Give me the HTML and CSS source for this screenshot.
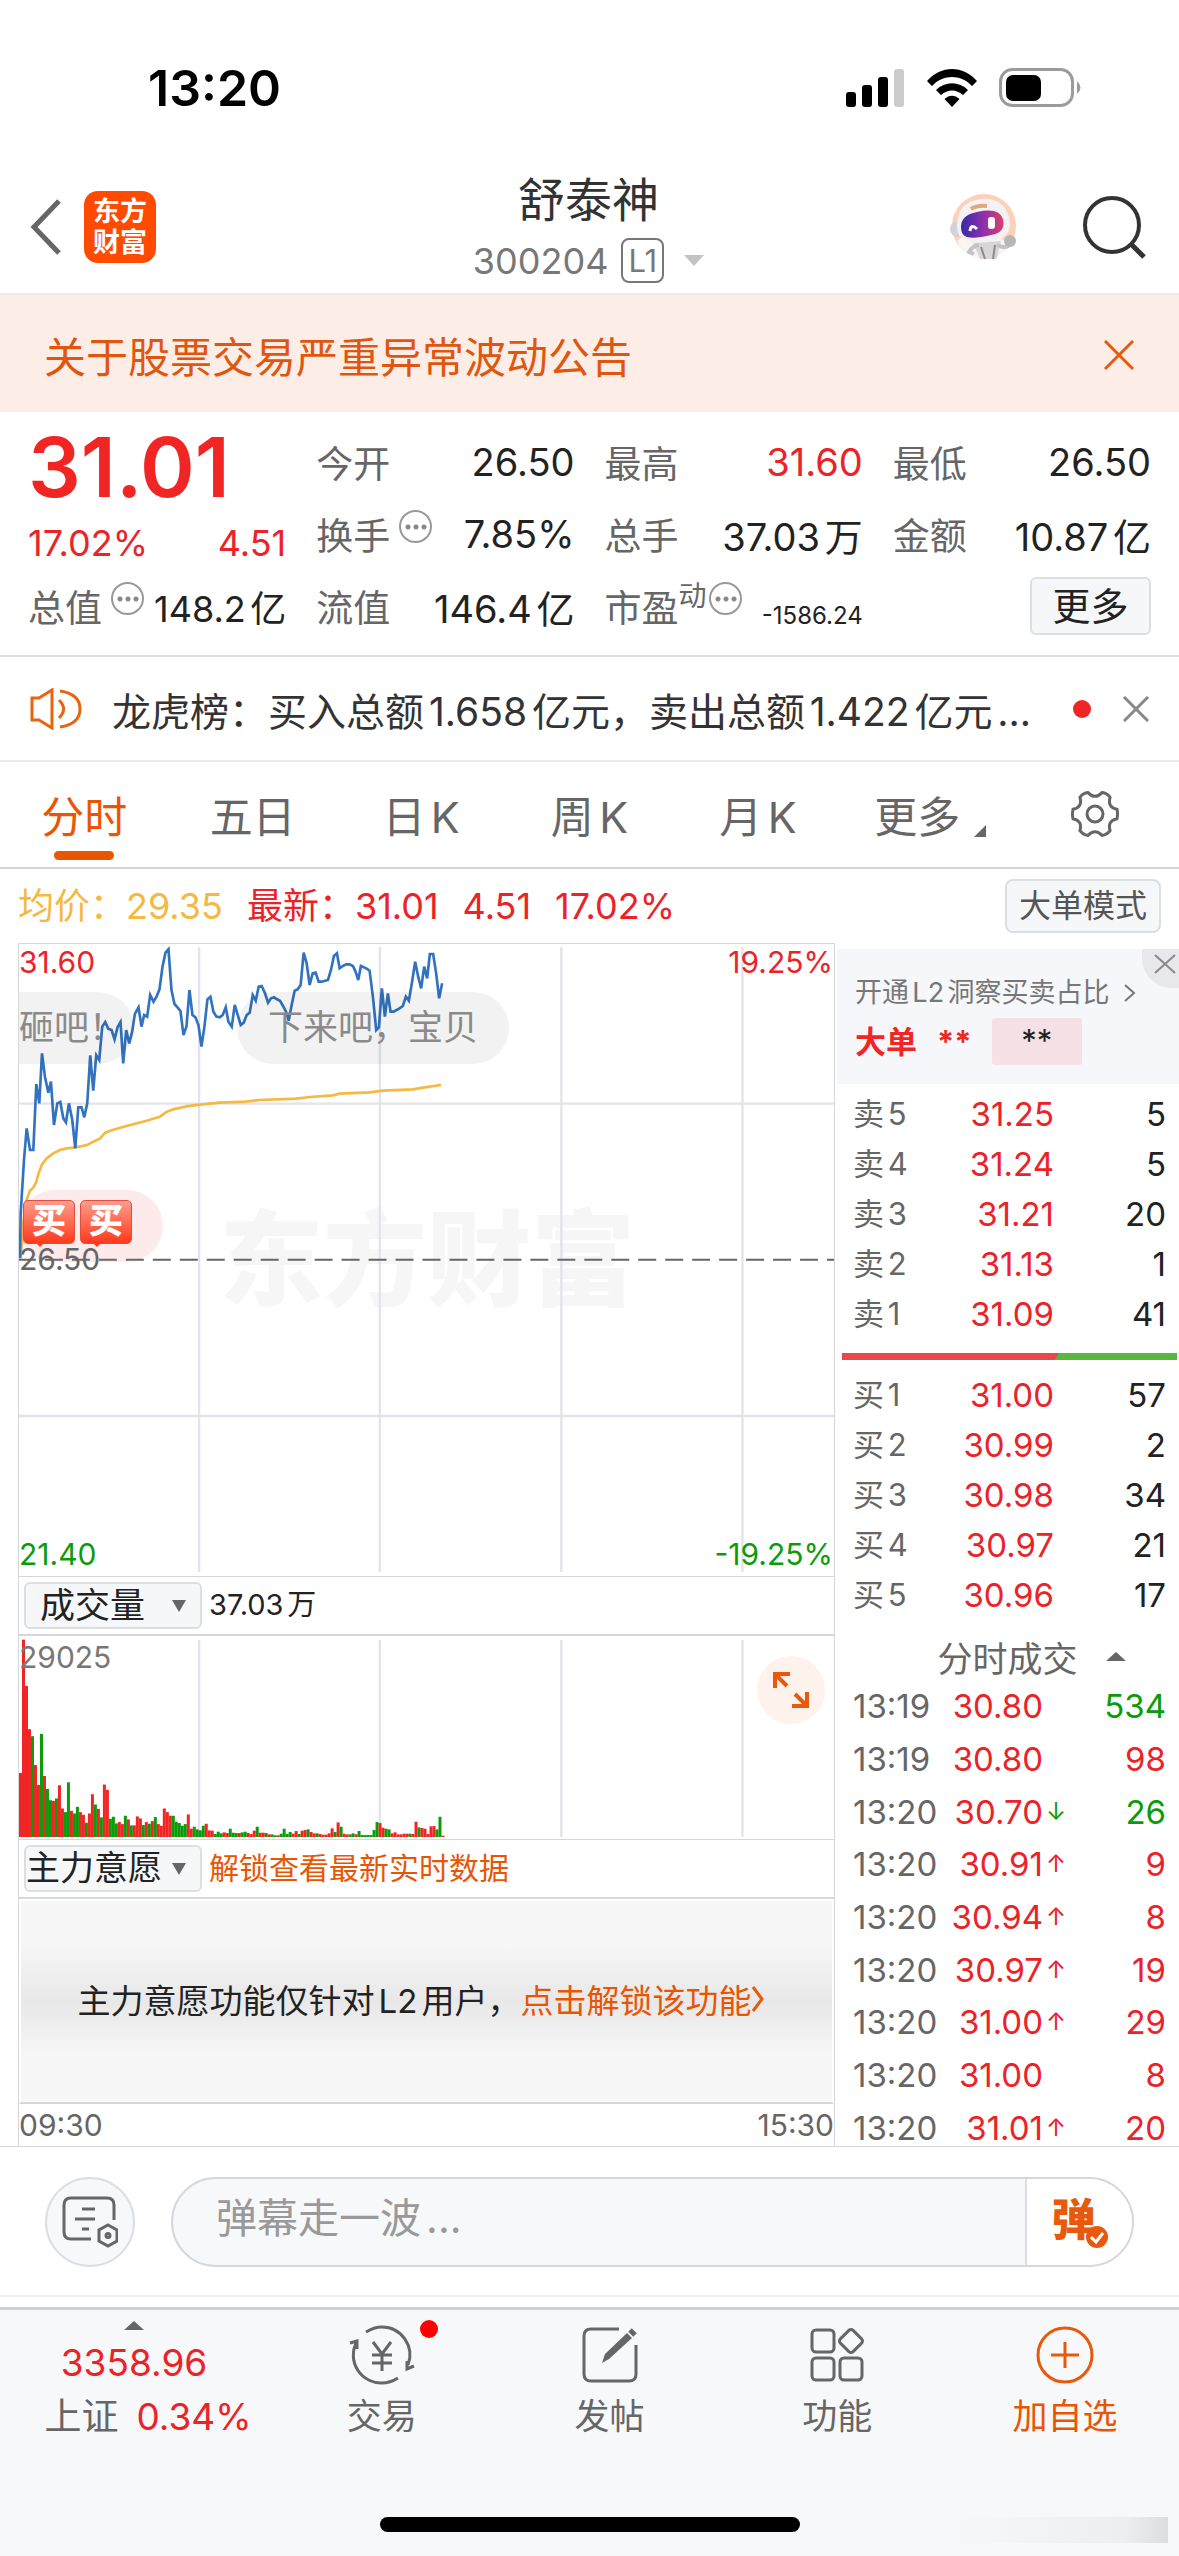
FILE: index.html
```html
<!DOCTYPE html>
<html lang="zh-CN">
<head>
    <meta charset="UTF-8">
    <meta name="viewport" content="width=device-width">
    <title>舒泰神 300204</title>
    <link rel="stylesheet" href="styles.css">
</head>
<body>
    <div class="status">
        <span class="clock">13:20</span>
        <svg class="status-icons" width="236" height="40" viewBox="0 0 236 40">
            <rect x="0" y="24" width="10" height="15" rx="3"/>
            <rect x="16" y="17" width="10" height="22" rx="3"/>
            <rect x="32" y="9" width="10" height="30" rx="3"/>
            <rect x="48" y="1" width="10" height="38" rx="3" fill="#ccc"/>
            <path d="M81 13C95-3 117-3 131 13L126 18C115 6 97 6 86 18Z"/>
            <path d="M90 22C99 13 113 13 122 22L117 27C110 21 102 21 95 27Z"/>
            <path d="M98.500 31C103 26.500 109 26.500 113.500 31L106 39Z"/>
            <rect x="154.500" y="1.500" width="72" height="36" rx="12" fill="none" stroke="#9b9b9b" stroke-width="3"/>
            <rect x="160" y="7" width="35" height="26" rx="7"/>
            <path d="M231 13Q238 19.500 231 26Z" fill="#9b9b9b"/>
        </svg>
    </div>

    <div class="header">
        <div class="header-left">
            <button class="icon-btn" aria-label="返回">
                <svg width="32" height="56" viewBox="0 0 32 56" fill="none" stroke="#666" stroke-width="5"><path d="M29 2L4 28L29 54"/></svg>
            </button>
            <a class="logo" href="#"><span>东方</span><span>财富</span></a>
        </div>
        <div class="title">
            <h1>舒泰神</h1>
            <div class="code">300204 <span class="level">L1</span><i class="tri-down"></i></div>
        </div>
        <div class="header-right">
            <svg width="72" height="72" viewBox="0 0 72 72">
                <circle cx="35" cy="35" r="32" fill="#fdd0b8"/>
                <path d="M8 50Q14 66 34 68Q52 68 60 54L46 42H18Z" fill="#fbf5f2"/>
                <path d="M24 52L31 68H48L52 50Z" fill="#d9d6d8"/>
                <path d="M32 56L36 68M46 54L44 68" stroke="#8e888c" stroke-width="2"/>
                <path d="M30 54Q22 56 20 61L25 63M48 54Q57 59 62 52" stroke="#c6c3c6" stroke-width="4" fill="none"/>
                <circle cx="61" cy="50" r="6" fill="#b9b5b8"/>
                <circle cx="9" cy="38" r="8" fill="#d5d2d5"/>
                <path d="M8 36Q8 10 32 8Q54 6 60 26Q64 44 50 48Q34 54 18 50Q8 46 8 36Z" fill="#f3f1f3"/>
                <path d="M22 18Q28 14 38 15" stroke="#e0a878" stroke-width="4" fill="none"/>
                <linearGradient id="visor"><stop offset="0" stop-color="#352aa8"/><stop offset=".5" stop-color="#8a2fb0"/><stop offset="1" stop-color="#dc3e68"/></linearGradient>
                <path d="M12 36Q12 24 28 21Q50 16 54 28Q57 42 42 44Q26 48 18 46Q12 44 12 36Z" fill="url(#visor)"/>
                <path d="M21 40Q22 32 28 38" stroke="#fff" stroke-width="3" fill="none"/>
                <rect x="39" y="26" width="7" height="12" rx="3" fill="#fff"/>
            </svg>
            <button class="icon-btn" aria-label="搜索">
                <svg width="66" height="66" viewBox="0 0 66 66" fill="none" stroke="#333" stroke-width="4"><circle cx="31" cy="31" r="27"/><path d="M50 50L63 63" stroke-width="5"/></svg>
            </button>
        </div>
    </div>

    <div class="notice">
        <a href="#">关于股票交易严重异常波动公告</a>
        <button class="icon-btn" aria-label="关闭公告">
            <svg width="32" height="32" viewBox="0 0 32 32" stroke="#e8590c" stroke-width="3"><path d="M2 2L30 30M30 2L2 30"/></svg>
        </button>
    </div>

    <div class="quote">
        <div class="price-box">
            <div class="price">31.01</div>
            <div class="cell red small"><span>17.02%</span><span>4.51</span></div>
        </div>
        <div class="cell c2"><span class="label">今开</span><span>26.50</span></div>
        <div class="cell c3"><span class="label">最高</span><span class="red">31.60</span></div>
        <div class="cell c4"><span class="label">最低</span><span>26.50</span></div>
        <div class="cell c2"><span class="label">换手<i class="info"></i></span><span>7.85%</span></div>
        <div class="cell c3"><span class="label">总手</span><span>37.03万</span></div>
        <div class="cell c4"><span class="label">金额</span><span>10.87亿</span></div>
        <div class="cell c1 small"><span class="label">总值<i class="info"></i></span><span>148.2亿</span></div>
        <div class="cell c2"><span class="label">流值</span><span>146.4亿</span></div>
        <div class="cell c3"><span class="label">市盈<sup>动</sup><i class="info near"></i></span><span class="pe">-1586.24</span></div>
        <div class="cell c4"><button class="more">更多</button></div>
    </div>

    <div class="news">
        <svg width="52" height="42" viewBox="0 0 52 42" fill="none" stroke="#e8640f" stroke-width="3">
            <path d="M2 10H9L22 2V40L9 32H2Z"/>
            <path d="M29 12Q38 21 29 30M30 3Q50 6 50 21Q50 36 30 39"/>
        </svg>
        <a href="#">龙虎榜：买入总额1.658亿元，卖出总额1.422亿元...</a>
        <i class="dot"></i>
        <button class="icon-btn" aria-label="关闭">
            <svg width="26" height="26" viewBox="0 0 26 26" stroke="#888" stroke-width="3"><path d="M1 1L25 25M25 1L1 25"/></svg>
        </button>
    </div>

    <div class="tabs">
        <button class="selected">分时</button>
        <button>五日</button>
        <button>日K</button>
        <button>周K</button>
        <button>月K</button>
        <button class="tab-more">更多</button>
        <button aria-label="设置">
            <svg width="48" height="46" viewBox="-1 0 48 46" fill="none" stroke="#666" stroke-width="3">
                <path d="M45 18.300Q46 23 45 27.700Q35.100 30 38.100 39.700Q35 43.800 30 44.400Q23 37 16 44.400Q11 43.800 7.900 39.700Q10.900 30 1 27.700Q0 23 1 18.300Q10.900 16 7.900 6.300Q11 2.200 16 1.600Q23 9 30 1.600Q35 2.200 38.100 6.300Q35.100 16 45 18.300Z"/>
                <circle cx="23" cy="23" r="8"/>
            </svg>
        </button>
    </div>

    <div class="summary">
        <span class="avg">均价：29.35</span>
        <span class="red">最新：31.01</span>
        <span class="red">4.51</span>
        <span class="red">17.02%</span>
        <button class="mode">大单模式</button>
    </div>

    <div class="main">
        <div class="charts">
            <div class="price-chart">
                <span class="watermark">东方财富</span>
                <!-- 坐标为 3 倍像素 -->
                <svg viewBox="57 42 2448 1896" preserveAspectRatio="none" fill="none">
                    <path class="grid" d="M598 51V1926M1141 51V1926M1686 51V1926M2230 51V1926M54 521H2505M54 1458H2505"/>
                    <path d="M54 989H2505" stroke="#666" stroke-width="6" stroke-dasharray="54 27"/>
                    <polyline stroke="#f5b942" stroke-width="8" points="62,985 68,900 78,815 90,782 100,773 108,758 116,730 126,703 140,685 160,670 180,660 200,655 226,652 262,645 280,635 300,626 316,608 335,601 380,588 440,572 480,560 500,546 520,538 560,529 600,524 660,518 740,515 780,510 890,506 930,501 1000,496 1020,491 1110,487 1150,482 1240,478 1270,473 1325,465"/>
                    <polyline stroke="#3273c0" stroke-width="8" points="60,985 62,850 72,690 80,595 90,660 100,660 109,462 118,520 126,370 135,440 145,488 153,455 162,585 172,520 181,516 190,565 198,577 207,520 217,570 226,655 235,532 245,532 253,562 262,520 271,376 280,482 289,376 298,390 307,290 316,276 325,296 335,300 344,328 353,292 362,276 370,400 379,300 388,340 397,305 405,252 416,232 425,290 433,255 442,260 451,195 461,215 470,200 479,178 488,110 497,68 506,58 515,180 524,222 533,232 542,243 551,315 560,290 569,180 578,255 587,262 596,285 605,350 614,290 623,208 632,200 641,245 650,260 660,262 669,255 678,232 686,275 696,290 705,225 714,255 723,285 732,278 741,255 750,248 759,195 768,212 777,170 786,168 796,190 805,218 814,205 823,202 832,208 841,212 850,228 859,245 867,272 876,225 885,182 894,178 903,165 912,68 921,100 930,165 939,130 948,128 957,155 966,155 985,150 994,120 1003,78 1012,70 1020,115 1030,108 1040,103 1050,103 1060,108 1068,125 1076,150 1084,108 1100,115 1110,122 1120,200 1130,300 1138,292 1147,175 1156,260 1165,190 1173,245 1182,245 1200,235 1210,228 1219,200 1228,212 1237,160 1247,95 1256,140 1265,175 1274,110 1283,145 1291,72 1301,72 1310,130 1319,205 1328,160"/>
                </svg>
                <span class="axis top red">31.60</span>
                <span class="axis top right red">19.25%</span>
                <span class="axis bottom green">21.40</span>
                <span class="axis bottom right green">-19.25%</span>
                <span class="bubble first">砸吧！</span>
                <span class="bubble second">下来吧，宝贝</span>
                <span class="bubble buy"><b>买</b><b>买</b></span>
                <span class="axis middle">26.50</span>
            </div>

            <div class="bar-row">
                <span class="drop"><select aria-label="副图指标一"><option>成交量</option></select></span>
                <span>37.03万</span>
            </div>
            <div class="vol-chart">
                <svg id="vol" viewBox="0 0 2448 612" preserveAspectRatio="none">
                    <path class="grid" d="M541 12V606M1084 12V606M1629 12V606M2173 12V606"/>
                </svg>
                <span class="axis volume">29025</span>
                <button class="expand" aria-label="放大">
                    <svg width="36" height="36" viewBox="0 0 36 36" fill="none" stroke="#e8590c" stroke-width="4"><path d="M2 16V2H17M3 3L14 14M34 20V34H19M33 33L22 22"/></svg>
                </button>
            </div>

            <div class="bar-row">
                <span class="drop tight"><select aria-label="副图指标二"><option>主力意愿</option></select></span>
                <a class="unlock" href="#">解锁查看最新实时数据</a>
            </div>
            <div class="locked">主力意愿功能仅针对L2用户，<a href="#">点击解锁该功能<svg width="12" height="26" viewBox="0 0 12 26" fill="none" stroke="#e8590c" stroke-width="3"><path d="M1 1L10 13L1 25"/></svg></a></div>
            <div class="times"><span>09:30</span><span>15:30</span></div>
        </div>

        <div class="side">
            <div class="l2">
                <a href="#">开通L2洞察买卖占比<svg width="12" height="18" viewBox="0 0 12 18" fill="none" stroke="#777" stroke-width="2"><path d="M1 1L10 9L1 17"/></svg></a>
                <div class="big"><b>大单</b><b>**</b><span>**</span></div>
                <button class="l2-close" aria-label="关闭">
                    <svg width="22" height="20" viewBox="0 0 22 20" stroke="#888" stroke-width="2"><path d="M1 1L21 19M21 1L1 19"/></svg>
                </button>
            </div>
            <table class="book">
                <tr><td>卖5</td><td>31.25</td><td>5</td></tr>
                <tr><td>卖4</td><td>31.24</td><td>5</td></tr>
                <tr><td>卖3</td><td>31.21</td><td>20</td></tr>
                <tr><td>卖2</td><td>31.13</td><td>1</td></tr>
                <tr><td>卖1</td><td>31.09</td><td>41</td></tr>
            </table>
            <div class="ratio"></div>
            <table class="book">
                <tr><td>买1</td><td>31.00</td><td>57</td></tr>
                <tr><td>买2</td><td>30.99</td><td>2</td></tr>
                <tr><td>买3</td><td>30.98</td><td>34</td></tr>
                <tr><td>买4</td><td>30.97</td><td>21</td></tr>
                <tr><td>买5</td><td>30.96</td><td>17</td></tr>
            </table>
            <button class="ticks-title">分时成交<i class="tri-up"></i></button>
            <table class="ticks">
                <tr><td>13:19</td><td>30.80</td><td></td><td class="green">534</td></tr>
                <tr><td>13:19</td><td>30.80</td><td></td><td>98</td></tr>
                <tr><td>13:20</td><td>30.70</td><td class="green">↓</td><td class="green">26</td></tr>
                <tr><td>13:20</td><td>30.91</td><td>↑</td><td>9</td></tr>
                <tr><td>13:20</td><td>30.94</td><td>↑</td><td>8</td></tr>
                <tr><td>13:20</td><td>30.97</td><td>↑</td><td>19</td></tr>
                <tr><td>13:20</td><td>31.00</td><td>↑</td><td>29</td></tr>
                <tr><td>13:20</td><td>31.00</td><td></td><td>8</td></tr>
                <tr><td>13:20</td><td>31.01</td><td>↑</td><td>20</td></tr>
            </table>
        </div>
    </div>

    <div class="danmu">
        <button class="danmu-set" aria-label="弹幕设置">
            <svg width="56" height="52" viewBox="0 0 56 52" fill="none" stroke="#666" stroke-width="3">
                <path d="M29 43H9Q2 43 2 36V9Q2 2 9 2H45Q52 2 52 9V24"/>
                <path d="M20 13H33M13 23H33M20 33H27"/>
                <path d="M46 29L55 34V45L46 50L37 45V34Z"/>
                <circle cx="46" cy="39.500" r="2"/>
            </svg>
        </button>
        <div class="danmu-box">
            <input type="text" placeholder="弹幕走一波..." aria-label="弹幕">
            <button class="danmu-on">弹<svg width="22" height="22" viewBox="0 0 22 22" fill="none"><circle cx="11" cy="11" r="11" fill="#e8590c"/><path d="M5 11L10 16L17 7" stroke="#fff" stroke-width="3"/></svg></button>
        </div>
    </div>

    <div class="footer">
        <div class="nav">
            <a class="index" href="#">
                <i class="tri-up"></i>
                <span class="red">3358.96</span>
                <span class="index-row">上证<span class="red">0.34%</span></span>
            </a>
            <a href="#">
                <svg width="68" height="60" viewBox="0 0 68 60" fill="none" stroke="#666" stroke-width="3">
                    <path d="M18 7Q26 2 34 2A28 28 0 0 1 60 40M50 53Q42 58 34 58A28 28 0 0 1 8 18M2 18L9 16V24M66 41L59 44V36"/>
                    <path d="M25 17L34 29L43 17M34 29V46M24 30H44M24 38H44"/>
                </svg>
                交易<i class="dot"></i>
            </a>
            <a href="#">
                <svg width="58" height="60" viewBox="0 0 58 60" fill="none" stroke="#666" stroke-width="3">
                    <path d="M38 4H10Q3 4 3 11V49Q3 56 10 56H48Q55 56 55 49V20"/>
                    <path d="M21 38L24 29L46 8L51 13L28 34Z" fill="#666" stroke="none"/>
                    <path d="M49 5L54 10" stroke-width="5"/>
                </svg>
                发帖
            </a>
            <a href="#">
                <svg width="56" height="60" viewBox="0 0 56 60" fill="none" stroke="#666" stroke-width="3">
                    <rect x="3" y="5" width="22" height="22" rx="4"/>
                    <rect x="3" y="33" width="22" height="22" rx="4"/>
                    <rect x="31" y="33" width="22" height="22" rx="4"/>
                    <rect x="33" y="7" width="18" height="18" rx="3" transform="rotate(45 42 16)"/>
                </svg>
                功能
            </a>
            <a class="add" href="#">
                <svg width="60" height="60" viewBox="0 0 60 60" fill="none" stroke="#e8590c" stroke-width="3"><circle cx="30" cy="30" r="27"/><path d="M30 17V43M16 30H44"/></svg>
                加自选
            </a>
        </div>
        <div class="home"></div>
        <div class="shade"></div>
    </div>

    <script>
        // 每分钟成交量，负数为绿柱
        var data = [193,595,455,325,-304,217,157,-311,184,-145,-111,109,-116,156,86,-75,-165,79,-71,-91,75,67,-43,71,129,-98,85,-59,158,142,-55,-61,-41,45,39,-64,53,-35,35,62,56,-36,45,-40,48,-60,39,34,86,75,64,-64,-46,-42,-34,-39,68,25,-31,-23,-20,-34,40,20,19,-9,-16,-11,14,12,-25,-13,-12,12,-14,-16,12,9,19,-31,13,13,-12,8,-8,-5,5,-10,-25,-9,-15,10,18,-9,19,21,-23,15,11,-11,9,7,7,11,26,-15,44,-31,10,8,-8,-11,8,-18,-6,-6,-6,-6,-21,-45,42,28,-25,-23,11,14,8,8,10,10,-10,9,46,-29,27,25,9,32,33,-23,-61,4];
        var oVol = document.getElementById("vol");
        for(var i=0; i<data.length; i++){
            var h = Math.abs(data[i]);
            var oBar = document.createElementNS("http://www.w3.org/2000/svg", "rect");
            oBar.setAttribute("x", i*9);
            oBar.setAttribute("y", 606-h);
            oBar.setAttribute("width", 9);
            oBar.setAttribute("height", h);
            oBar.setAttribute("fill", data[i] < 0 ? "#0a9c0a" : "#f22525");
            oVol.appendChild(oBar);
        }
    </script>
</body>
</html>
```
FILE: styles.css
```css
*{
    margin: 0;
    padding: 0;
    box-sizing: border-box;
}
body{
    font-family: Inter, "Noto Sans CJK SC", sans-serif;
    color: #222;
    background: #fff;
    text-autospace: normal;
}
a{
    color: inherit;
    text-decoration: none;
}
button,input,select{
    font: inherit;
    color: inherit;
    border: none;
    background: none;
}
svg{
    display: block;
    flex-shrink: 0;
}
table{
    border-collapse: collapse;
    width: 100%;
}
i{
    display: block;
}
.red{
    color: #ec2229;
}
.green{
    color: #0a9c0a;
}
.icon-btn{
    display: block;
}
.tri-down{
    border: 10px solid transparent;
    border-top: 11px solid #c4c4c4;
    border-bottom: none;
}
.tri-up{
    border: 10px solid transparent;
    border-bottom: 9px solid #666;
    border-top: none;
}
.dot{
    width: 18px;
    height: 18px;
    border-radius: 50%;
    background: #f22525;
}

/* 状态栏 */
.status{
    display: flex;
    justify-content: space-between;
    align-items: center;
    height: 162px;
    padding: 14px 97px 0 148px;
}
.clock{
    font-size: 50px;
    font-weight: 600;
    color: #000;
}

/* 头部 */
.header{
    display: grid;
    grid-template-columns: 1fr auto 1fr;
    align-items: center;
    height: 131px;
    padding: 0 32px 2px 30px;
}
.header-left,.header-right{
    display: flex;
    align-items: center;
    gap: 22px;
}
.header-right{
    justify-content: flex-end;
    gap: 60px;
}
.logo{
    display: flex;
    flex-direction: column;
    justify-content: center;
    align-items: center;
    width: 72px;
    height: 72px;
    border-radius: 14px;
    background: #ff4a00;
    color: #fff;
    font-size: 27px;
    line-height: 31px;
    font-weight: 700;
}
.title{
    text-align: center;
}
.title h1{
    margin-bottom: 6px;
    font-size: 47px;
    line-height: 62px;
    font-weight: 400;
    color: #333;
}
.code{
    display: flex;
    align-items: center;
    gap: 13px;
    font-size: 36px;
    line-height: 48px;
    color: #777;
}
.level{
    padding: 0 5px;
    border: 2px solid #777;
    border-radius: 8px;
    font-size: 31px;
    line-height: 41px;
}
.code .tri-down{
    margin-left: 7px;
}

/* 公告 */
.notice{
    display: flex;
    justify-content: space-between;
    align-items: center;
    height: 119px;
    padding: 2px 44px 0;
    background: #fceee6;
    border-top: 2px solid #f4e8e4;
    color: #e0560f;
    font-size: 42px;
}

/* 行情 */
.quote{
    display: grid;
    grid-template-columns: repeat(4, 1fr);
    grid-auto-rows: 72px;
    column-gap: 30px;
    padding: 14px 28px 13px;
    border-bottom: 2px solid #dcdddf;
    font-size: 38px;
}
.price-box{
    grid-row: 1 / 3;
    grid-column: 1;
}
.price{
    font-size: 83px;
    line-height: 82px;
    font-weight: 600;
    color: #f22525;
}
.price-box .cell{
    height: 70px;
}
.cell{
    display: flex;
    justify-content: space-between;
    align-items: center;
    white-space: nowrap;
}
.c1{
    grid-column: 1;
}
.c2{
    grid-column: 2;
}
.c3{
    grid-column: 3;
}
.c4{
    grid-column: 4;
}
.small{
    font-size: 36px;
}
.label{
    display: flex;
    align-items: center;
    color: #666;
    font-size: 37px;
}
.label sup{
    font-size: 28px;
    line-height: 28px;
    margin-bottom: 20px;
}
.info{
    width: 33px;
    height: 33px;
    margin: 0 0 16px 9px;
    border: 2px solid #999;
    border-radius: 50%;
    background-image: radial-gradient(circle, #888 2px, transparent 3px), radial-gradient(circle, #888 2px, transparent 3px), radial-gradient(circle, #888 2px, transparent 3px);
    background-size: 8px 8px;
    background-position: 3px 11px, 11px 11px, 19px 11px;
    background-repeat: no-repeat;
}
.info.near{
    margin-left: 2px;
}
.pe{
    font-size: 24px;
    padding-top: 18px;
}
.more{
    width: 121px;
    height: 58px;
    margin-left: auto;
    border: 2px solid #dcdfe2;
    border-radius: 6px;
    background: #f5f7f9;
    line-height: 52px;
}

/* 快讯 */
.news{
    display: flex;
    align-items: center;
    height: 105px;
    padding: 0 30px;
    border-bottom: 2px solid #ececee;
    font-size: 39px;
    color: #333;
}
.news a{
    flex: 1;
    margin-left: 30px;
    white-space: nowrap;
}
.news .dot{
    margin-right: 32px;
}

/* 周期 */
.tabs{
    display: grid;
    grid-template-columns: repeat(7, 1fr);
    height: 107px;
    border-bottom: 2px solid #d5d5d5;
    font-size: 43px;
    color: #666;
}
.tabs button{
    display: flex;
    justify-content: center;
    align-items: center;
    position: relative;
    padding-bottom: 2px;
}
.tabs .selected{
    color: #ea5504;
}
.tabs .selected::after{
    content: "";
    position: absolute;
    bottom: 7px;
    width: 60px;
    height: 9px;
    border-radius: 5px;
    background: #ea5504;
}
.tabs .tab-more{
    padding-left: 8px;
}
.tab-more::after{
    content: "";
    align-self: flex-end;
    margin: 0 0 28px 14px;
    border: 6px solid #666;
    border-top-color: transparent;
    border-left-color: transparent;
}

.summary{
    display: flex;
    align-items: center;
    gap: 24px;
    height: 74px;
    padding: 0 18px;
    font-size: 36px;
    line-height: 50px;
}
.avg{
    color: #f5b942;
}
.mode{
    width: 156px;
    height: 54px;
    margin-left: auto;
    border: 2px solid #dcdfe2;
    border-radius: 8px;
    background: #f5f7f9;
    font-size: 32px;
    line-height: 50px;
    color: #555;
}

/* 主体 */
.main{
    display: grid;
    grid-template-columns: minmax(0, 1fr) 344px;
    padding-left: 18px;
    border-bottom: 1px solid #d5d7da;
}
.charts{
    border: 1px solid #d5d7da;
    border-bottom: none;
}
.price-chart,.vol-chart{
    position: relative;
}
.price-chart{
    height: 632px;
    overflow: hidden;
}
.price-chart > svg{
    position: relative;
    width: 100%;
    height: 100%;
}
.grid{
    stroke: #e3e3ea;
    stroke-width: 7px;
    fill: none;
}
.watermark{
    position: absolute;
    left: 200px;
    top: 256px;
    color: #f6f6f6;
    font-size: 104px;
    line-height: 120px;
    font-weight: 900;
}
.axis{
    position: absolute;
    left: 0;
    font-size: 30px;
    line-height: 36px;
}
.right{
    left: auto;
    right: 1px;
}
.top{
    top: 0;
}
.bottom{
    bottom: 4px;
}
.middle{
    top: 297px;
    color: #666;
}
.volume{
    top: 3px;
    color: #777;
}
.bubble{
    position: absolute;
    top: 48px;
    height: 72px;
    padding: 0 31px;
    border-radius: 36px;
    background: rgba(0, 0, 0, .05);
    color: #8a8a8a;
    font-size: 35px;
    line-height: 70px;
    white-space: nowrap;
}
.first{
    left: 0;
    padding: 0 10px 0 0;
    border-radius: 0 36px 36px 0;
}
.second{
    left: 218px;
}
.buy{
    display: flex;
    align-items: center;
    gap: 5px;
    top: 246px;
    left: 0;
    padding: 0 31px 8px 4px;
    background: rgba(240, 80, 80, .12);
}
.buy b{
    position: relative;
    width: 52px;
    height: 44px;
    border: 1px solid #e0503c;
    border-radius: 5px;
    background: linear-gradient(#ff9c8c, #ff3a1c);
    color: #fff;
    font-size: 34px;
    line-height: 40px;
    font-weight: 900;
    text-align: center;
}
.buy b::after{
    content: "";
    position: absolute;
    left: 12px;
    top: 42px;
    border: 4px solid transparent;
    border-top-color: #ff3a1c;
}
.bar-row{
    display: flex;
    align-items: center;
    gap: 7px;
    height: 60px;
    padding: 0 0 1px 5px;
    border-top: 1px solid #d5d7da;
    border-bottom: 2px solid #d5d7da;
    font-size: 29px;
    line-height: 44px;
}
.drop{
    position: relative;
    width: 178px;
    height: 47px;
    border: 2px solid #dcdfe2;
    border-radius: 6px;
    background: #f5f7f9;
}
.drop select{
    display: block;
    appearance: none;
    width: 100%;
    height: 42px;
    padding-left: 14px;
    font-size: 35px;
    line-height: 42px;
}
.drop::after{
    content: "";
    position: absolute;
    right: 14px;
    top: 16px;
    border: 7px solid transparent;
    border-top: 12px solid #666;
    border-bottom: none;
}
.tight select{
    padding-left: 0;
    font-size: 34px;
}
.vol-chart{
    height: 203px;
}
.vol-chart > svg{
    width: 100%;
    height: 100%;
}
.expand{
    display: flex;
    justify-content: center;
    align-items: center;
    position: absolute;
    right: 9px;
    top: 20px;
    width: 68px;
    height: 68px;
    border-radius: 50%;
    background: #fdf2ec;
}
.expand svg,.vol-chart .expand svg{
    width: 36px;
    height: 36px;
}
.unlock,.locked a{
    color: #ea5504;
}
.unlock{
    font-size: 30px;
}
.locked{
    display: flex;
    justify-content: center;
    align-items: center;
    height: 205px;
    padding: 0 12px 6px 0;
    border: 2px solid #fff;
    border-bottom: 2px solid #d5d7da;
    background: linear-gradient(#f7f7f7 20%, #e8e8e8 50%, #f7f7f7 78%);
    font-size: 33px;
    white-space: nowrap;
}
.locked a{
    display: flex;
    align-items: center;
}
.times{
    display: flex;
    justify-content: space-between;
    height: 42px;
    font-size: 30px;
    line-height: 43px;
    color: #666;
}

/* 盘口 */
.side{
    padding: 6px 0 0 2px;
}
.l2{
    position: relative;
    height: 135px;
    padding: 23px 0 0 18px;
    background: #f6f7fa;
    font-size: 27px;
    line-height: 42px;
    color: #777;
}
.l2 a{
    display: flex;
    align-items: center;
    gap: 15px;
    white-space: nowrap;
}
.big{
    display: flex;
    align-items: center;
    gap: 20px;
    margin-top: 4px;
    font-size: 31px;
    line-height: 46px;
    color: #222;
}
.big b{
    color: #f22525;
}
.big span{
    width: 90px;
    height: 47px;
    border-radius: 3px;
    background: #f5e1e5;
    text-align: center;
}
.l2-close{
    position: absolute;
    right: 0;
    top: 0;
    width: 37px;
    height: 39px;
    padding: 0 0 10px 12px;
    border-radius: 0 0 0 30px;
    background: #e8e8ec;
}
.book{
    margin-top: 5px;
    font-size: 33px;
}
.book td{
    height: 50px;
    line-height: 50px;
}
.book td:first-child{
    width: 80px;
    padding-left: 16px;
    color: #666;
    font-size: 31px;
}
.book td:nth-child(2){
    text-align: right;
    color: #ec2229;
}
.book td:last-child{
    width: 125px;
    padding-right: 13px;
    text-align: right;
}
.ratio{
    height: 7px;
    margin: 14px 2px 10px 5px;
    background: linear-gradient(120deg, #e9484a 64%, #58b741 64%);
}
.ticks-title{
    display: flex;
    justify-content: center;
    align-items: center;
    gap: 28px;
    width: 100%;
    height: 57px;
    padding: 10px 0 0 47px;
    margin-top: 3px;
    font-size: 35px;
    color: #666;
}
.ticks{
    height: 474px;
    margin-bottom: -8px;
    font-size: 33px;
    color: #ec2229;
}
.ticks td{
    line-height: 50px;
}
.ticks td:first-child{
    width: 105px;
    padding-left: 16px;
    color: #666;
}
.ticks td:nth-child(2){
    width: 101px;
    text-align: right;
}
.ticks td:nth-child(3){
    padding-left: 3px;
    font-size: 24px;
}
.ticks td:last-child{
    padding-right: 13px;
    text-align: right;
}

/* 弹幕 */
.danmu{
    display: flex;
    gap: 36px;
    padding: 30px 45px 28px;
    border-bottom: 2px solid #efefef;
}
.danmu-set{
    display: flex;
    justify-content: center;
    align-items: center;
    width: 90px;
    height: 90px;
    border: 2px solid #dcdee1;
    border-radius: 50%;
    background: #f6f8fa;
}
.danmu-box{
    display: flex;
    flex: 1;
    height: 90px;
    border: 2px solid #d5d7da;
    border-radius: 45px;
    background: #f6f8fa;
    overflow: hidden;
}
.danmu-box input{
    flex: 1;
    min-width: 0;
    padding: 0 0 8px 43px;
    font-size: 41px;
}
.danmu-box input::placeholder{
    color: #999;
}
.danmu-on{
    position: relative;
    width: 107px;
    padding: 0 12px 10px 0;
    border-left: 2px solid #dcdee1;
    background: #fff;
    color: #e8590c;
    font-size: 44px;
    font-weight: 900;
}
.danmu-on svg{
    position: absolute;
    right: 24px;
    bottom: 17px;
}

/* 底部 */
.footer{
    position: relative;
    margin-top: 10px;
    border-top: 3px solid #cfd1d4;
    background: #f6f8fa;
    overflow: hidden;
}
.nav{
    display: grid;
    grid-template-columns: 268px repeat(4, 1fr);
    height: 140px;
    color: #666;
    font-size: 35px;
    line-height: 44px;
}
.nav a{
    display: flex;
    flex-direction: column;
    align-items: center;
    position: relative;
    padding-top: 15px;
    gap: 9px;
}
.nav .dot{
    position: absolute;
    left: 152px;
    top: 10px;
    background: #f00;
}
.nav .index{
    padding-top: 11px;
    gap: 12px;
    font-size: 37px;
    line-height: 42px;
}
.index-row{
    display: flex;
    gap: 18px;
    padding-left: 28px;
}
.nav .add{
    color: #ea5504;
}
.home{
    width: 420px;
    height: 15px;
    margin: 67px auto 24px;
    border-radius: 8px;
    background: #000;
}
.shade{
    position: absolute;
    right: 11px;
    bottom: 13px;
    width: 215px;
    height: 26px;
    background: linear-gradient(90deg, transparent, #eceef0 80%, #dcdddf);
}
```
